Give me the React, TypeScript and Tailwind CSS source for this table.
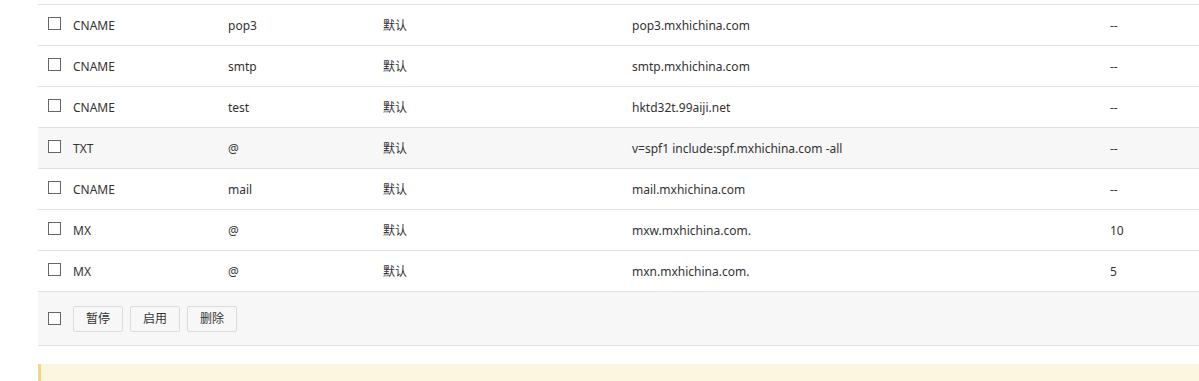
import React from "react";

type Rec = { type: string; host: string; line: string; value: string; mx: string; hover?: boolean };

const RECORDS: Rec[] = [
  { type: "CNAME", host: "pop3", line: "默认", value: "pop3.mxhichina.com", mx: "--" },
  { type: "CNAME", host: "smtp", line: "默认", value: "smtp.mxhichina.com", mx: "--" },
  { type: "CNAME", host: "test", line: "默认", value: "hktd32t.99aiji.net", mx: "--" },
  { type: "TXT", host: "@", line: "默认", value: "v=spf1 include:spf.mxhichina.com -all", mx: "--", hover: true },
  { type: "CNAME", host: "mail", line: "默认", value: "mail.mxhichina.com", mx: "--" },
  { type: "MX", host: "@", line: "默认", value: "mxw.mxhichina.com.", mx: "10" },
  { type: "MX", host: "@", line: "默认", value: "mxn.mxhichina.com.", mx: "5" },
];

function Box() {
  return <span className="block w-[13px] h-[13px] border border-[#666] bg-white shrink-0" />;
}

export default function App() {
  return (
    <div
      className="w-[1199px] h-[381px] bg-white overflow-hidden pt-[4px] pl-[38px] text-[12px] text-[#333]"
      style={{ fontFamily: '"Noto Sans", "Noto Sans CJK SC", sans-serif' }}
    >
      <div className="border-t border-[#e1e1e1]">
        {RECORDS.map((r, i) => (
          <div
            key={i}
            className={`flex items-center h-[41px] border-b border-[#e1e1e1] ${r.hover ? "bg-[#f7f7f7]" : "bg-white"}`}
          >
            <div className="w-[35px] pl-[10px] pb-[3px]">
              <Box />
            </div>
            <div className="flex flex-1 pt-[2px]">
              <div className="w-[155px]">{r.type}</div>
              <div className="w-[155px]">{r.host}</div>
              <div className="w-[249px]">{r.line}</div>
              <div className="w-[478px]">{r.value}</div>
              <div className="flex-1">{r.mx}</div>
            </div>
          </div>
        ))}
        <div className="flex items-center h-[54px] bg-[#f7f7f7] border-b border-[#e1e1e1]">
          <div className="w-[35px] pl-[10px] pb-[1px]">
            <Box />
          </div>
          <div className="flex gap-[7px]">
            {["暂停", "启用", "删除"].map((t) => (
              <button
                key={t}
                className="w-[50px] h-[26px] border border-[#dcdcdc] bg-[#f7f7f7] rounded-[2px] text-[12px] text-[#333]"
              >
                {t}
              </button>
            ))}
          </div>
        </div>
      </div>
      <div className="mt-[18px] h-[20px] bg-[#fcf6e1] border-l-[3px] border-[#f0d68a]" />
    </div>
  );
}
